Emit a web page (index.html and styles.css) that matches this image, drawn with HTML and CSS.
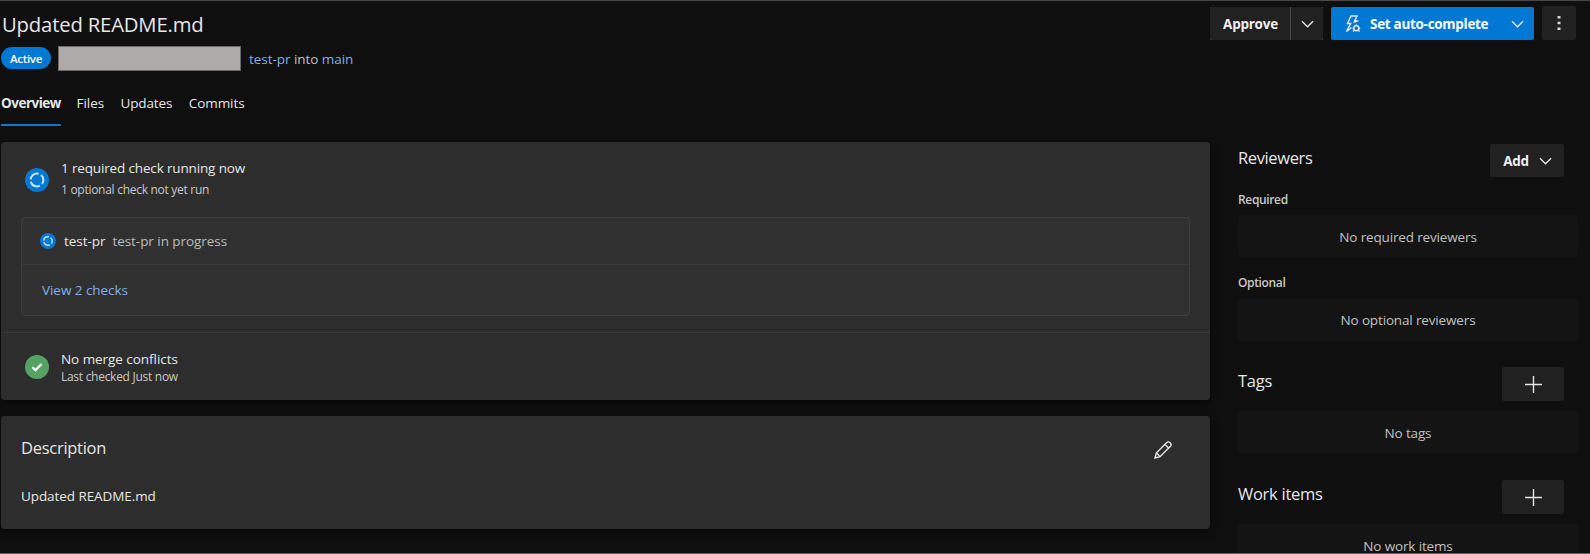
FILE: index.html
```html
<!DOCTYPE html>
<html lang="en">
<head>
    <meta charset="UTF-8">
    <meta name="viewport" content="width=device-width, initial-scale=1.0">
    <title>Updated README.md</title>
    <link rel="stylesheet" href="styles.css">
</head>
<body>

    <header class="page-header">
        <div class="header-info">
            <h1>Updated README.md</h1>
            <div class="pr-meta">
                <span class="status-pill">Active</span>
                <span class="author-box"></span>
                <span class="branches"><a class="link">test-pr</a> into <a class="link">main</a></span>
            </div>
        </div>
        <div class="header-actions">
            <div class="split-button">
                <button class="btn approve-btn">Approve</button>
                <button class="btn approve-menu">
                    <svg class="chevron" viewBox="0 0 14 8"><path d="M1 1l6 6 6-6"/></svg>
                </button>
            </div>
            <button class="btn primary-btn">
                <svg class="auto-icon" viewBox="0 0 16 18">
                    <path d="M8.500 7.500L12 6L9.800 5.500L12 1H6L2.500 8.500h3.200L1.500 16.500L6.500 12.500"/>
                    <circle cx="11.300" cy="13.300" r="2.500"/>
                    <path d="M11.300 9.500V11M7.500 13.300H9M13.600 13.300h1.600M8 16.500l1.500-1.500M14.600 16.500l-1.500-1.500"/>
                </svg>
                <span class="primary-text">Set auto-complete</span>
                <svg class="chevron" viewBox="0 0 14 8"><path d="M1 1l6 6 6-6"/></svg>
            </button>
            <button class="btn more-btn">
                <svg class="more-icon" viewBox="0 0 4 16"><path d="M.5 1h3v2.500h-3zM.5 6.800h3v2.500h-3zM.5 12.500h3V15h-3z"/></svg>
            </button>
        </div>
    </header>

    <nav class="tabs">
        <a class="tab selected">Overview</a>
        <a class="tab">Files</a>
        <a class="tab updates">Updates</a>
        <a class="tab">Commits</a>
    </nav>

    <main class="content">
        <div class="main-column">
            <section class="card status-card">
                <div class="status-row checks-row">
                    <svg class="status-icon" viewBox="0 0 24 24">
                        <circle class="blue" cx="12" cy="12" r="12"/>
                        <circle class="ring" cx="12" cy="12" r="6.400"/>
                    </svg>
                    <div class="checks-info">
                        <div class="checks-title">1 required check running now</div>
                        <div class="status-sub checks-sub">1 optional check not yet run</div>
                    </div>
                </div>
                <div class="checks-box">
                    <div class="check-line">
                        <svg class="small-icon" viewBox="0 0 24 24">
                            <circle class="blue" cx="12" cy="12" r="12"/>
                            <circle class="ring" cx="12" cy="12" r="6.400"/>
                        </svg>
                        <span class="check-name">test-pr</span>
                        <span class="check-state">test-pr in progress</span>
                    </div>
                    <div class="view-line"><a class="link">View 2 checks</a></div>
                </div>
                <div class="status-row merge-row">
                    <svg class="status-icon" viewBox="0 0 24 24">
                        <circle class="green" cx="12" cy="12" r="12"/>
                        <path class="tick" d="M7.500 12.200l3 3 6-6.200"/>
                    </svg>
                    <div>
                        <div>No merge conflicts</div>
                        <div class="status-sub merge-sub">Last checked Just now</div>
                    </div>
                </div>
            </section>

            <section class="card description-card">
                <div class="description-head">
                    <h2>Description</h2>
                    <svg class="pencil" viewBox="0 0 18 18">
                        <path d="M1 17l1.300-5L12.500 1.800a2.500 2.500 0 0 1 3.700 3.700L6 15.700zM2.500 12l3.500 3.500M11 3.500L14.500 7"/>
                    </svg>
                </div>
                <p class="description-text">Updated README.md</p>
            </section>
        </div>

        <aside class="side-column">
            <div class="side-head reviewers-head">
                <h2>Reviewers</h2>
                <button class="btn add-btn">Add
                    <svg class="chevron" viewBox="0 0 14 8"><path d="M1 1l6 6 6-6"/></svg>
                </button>
            </div>
            <h3>Required</h3>
            <div class="empty-box">No required reviewers</div>
            <h3 class="optional-label">Optional</h3>
            <div class="empty-box">No optional reviewers</div>

            <div class="side-head">
                <h2>Tags</h2>
                <button class="btn plus-btn">
                    <svg class="plus" viewBox="0 0 17 17"><path d="M8.500 0v17M0 8.500h17"/></svg>
                </button>
            </div>
            <div class="empty-box">No tags</div>

            <div class="side-head">
                <h2>Work items</h2>
                <button class="btn plus-btn">
                    <svg class="plus" viewBox="0 0 17 17"><path d="M8.500 0v17M0 8.500h17"/></svg>
                </button>
            </div>
            <div class="empty-box">No work items</div>
        </aside>
    </main>

</body>
</html>
```

FILE: styles.css
```css
* {
    box-sizing: border-box;
}

body {
    margin: 0;
    height: 554px;
    overflow: hidden;
    background-color: #0f0f0f;
    border-top: 1px solid #484848;
    border-bottom: 1px solid #606060;
    color: #e6e6e6;
    font-family: "Open Sans", "Noto Sans", sans-serif;
    font-size: 13.5px;
    line-height: 20px;
    letter-spacing: -0.05px;
    white-space: nowrap;
}

h1, h2, h3, p {
    margin: 0;
    font-weight: 400;
}

svg {
    display: block;
    flex: none;
    fill: none;
    stroke: #e6e6e6;
}

.link {
    color: #82aeec;
}

/* Header */
.page-header {
    display: flex;
    justify-content: space-between;
    height: 85px;
    padding: 5px 14px 0 1px;
}

h1 {
    padding: 4px 0 0 1px;
    font-size: 20.3px;
    line-height: 28px;
    letter-spacing: -0.18px;
}

.pr-meta {
    display: flex;
    align-items: center;
    height: 24px;
    margin-top: 8px;
}

.status-pill {
    width: 50px;
    height: 22px;
    border-radius: 11px;
    background-color: #0078d4;
    color: #fff;
    font-size: 11.5px;
    font-weight: 600;
    line-height: 23px;
    letter-spacing: -0.3px;
    text-align: center;
}

.author-box {
    width: 183px;
    height: 25px;
    margin: 0 8px 0 7px;
    border: 1px solid #6d6969;
    background-color: #aeaaa9;
}

.branches {
    padding-top: 2px;
    color: #c0c0c0;
}

.header-actions {
    display: flex;
    gap: 8px;
    height: 34px;
}

.btn {
    display: flex;
    align-items: center;
    justify-content: center;
    padding: 0;
    border: none;
    border-radius: 2px;
    background-color: #212121;
    color: #f0f0f0;
    font-family: inherit;
    font-size: 13.5px;
    font-weight: 700;
    letter-spacing: -0.3px;
    white-space: nowrap;
}

.split-button {
    display: flex;
    gap: 1px;
    height: 33px;
    margin-top: 1px;
    background-color: #484848;
}

.approve-btn {
    width: 80px;
    padding: 1px 0 0 1px;
    border-radius: 2px 0 0 2px;
    letter-spacing: -0.25px;
}

.approve-menu {
    width: 32px;
    border-radius: 0 2px 2px 0;
}

.chevron {
    width: 13px;
    height: 8px;
    stroke-width: 1.4;
}

.primary-btn {
    width: 203px;
    height: 33px;
    margin-top: 1px;
    justify-content: flex-start;
    padding-left: 14px;
    background-color: #0078d4;
    color: #fff;
}

.primary-text {
    width: 141px;
    margin-left: 9px;
    padding-top: 1px;
    text-align: left;
}

.auto-icon {
    width: 16px;
    height: 18px;
    stroke-width: 1.4;
}

.more-btn {
    width: 34px;
}

.more-icon {
    width: 4px;
    height: 16px;
    fill: #d8d8d8;
    stroke: none;
}

/* Tabs */
.tabs {
    display: flex;
    gap: 16.5px;
    height: 40px;
    padding-left: 1px;
}

.tab {
    height: 40px;
    padding-top: 7px;
}

.tab.selected {
    width: 60px;
    margin-right: -1px;
    border-bottom: 2px solid #0078d4;
    font-weight: 700;
    letter-spacing: -0.5px;
}

.tab.updates {
    letter-spacing: -0.15px;
}

/* Main column */
.content {
    display: flex;
    gap: 28px;
    padding: 16px 12px 0 1px;
}

.main-column {
    width: 1209px;
    flex: none;
}

.card {
    border-radius: 4px;
    background-color: #2d2d2d;
    box-shadow: 0 3px 7px rgba(0, 0, 0, 0.6);
}

.status-card {
    height: 258px;
    padding-top: 15px;
}

.status-row {
    display: flex;
    align-items: center;
    padding-left: 24px;
    gap: 12px;
}

.checks-row {
    height: 46px;
}

.checks-info {
    padding-bottom: 2px;
}

.checks-title {
    letter-spacing: -0.15px;
}

.status-icon {
    width: 24px;
    height: 24px;
}

.small-icon {
    width: 16px;
    height: 16px;
}

.blue {
    fill: #0078d4;
    stroke: none;
}

.green {
    fill: #55a362;
    stroke: none;
}

.ring {
    stroke: #cfe6fa;
    stroke-width: 2;
    stroke-dasharray: 10.8 2.6;
    stroke-dashoffset: -6.8;
}

.tick {
    stroke: #fff;
    stroke-width: 2.3;
}

.status-sub {
    color: #c8c8c8;
    font-size: 12px;
    letter-spacing: -0.28px;
}

.checks-sub {
    margin-top: 2px;
}

.checks-box {
    height: 99px;
    margin: 14px 20px 0;
    border: 1px solid #3e3e3e;
    border-radius: 4px;
    background-color: #303030;
}

.check-line {
    display: flex;
    align-items: center;
    height: 47px;
    padding-left: 18px;
    border-bottom: 1px solid #383838;
}

.check-name {
    margin-left: 8px;
}

.check-state {
    margin-left: 7px;
    color: #bdbdbd;
}

.view-line {
    padding: 15px 0 0 20px;
}

.merge-row {
    height: 68px;
    margin-top: 16px;
    border-top: 1px solid #3a3a3a;
}

.merge-sub {
    line-height: 15px;
}

.description-card {
    height: 113px;
    margin-top: 16px;
    padding: 20px 38px 0 20px;
}

.description-head {
    display: flex;
    justify-content: space-between;
}

h2 {
    font-size: 16.5px;
    line-height: 24px;
    letter-spacing: -0.27px;
}

.pencil {
    width: 18px;
    height: 18px;
    margin-top: 5px;
    stroke-width: 1.4;
}

.description-text {
    margin-top: 26px;
    letter-spacing: -0.08px;
}

/* Right column */
.side-column {
    width: 340px;
}

.side-column h2 {
    padding-top: 2px;
}

.side-head {
    display: flex;
    justify-content: space-between;
    align-items: flex-start;
    height: 44px;
    margin-top: 26px;
    padding-right: 14px;
}

.reviewers-head {
    height: 48px;
    margin-top: 0;
    padding-top: 2px;
}

.reviewers-head h2 {
    letter-spacing: -0.38px;
}

.add-btn {
    width: 74px;
    height: 33px;
    padding: 1px 0 0 1px;
    gap: 10px;
}

.plus-btn {
    width: 62px;
    height: 34px;
}

.plus {
    width: 17px;
    height: 17px;
    stroke-width: 1.4;
}

h3 {
    height: 25px;
    color: #c8c8c8;
    font-size: 12px;
    font-weight: 600;
    line-height: 20px;
    letter-spacing: -0.35px;
}

.optional-label {
    margin-top: 15px;
}

.empty-box {
    height: 43px;
    border-radius: 4px;
    background-color: #141414;
    color: #c0c0c0;
    line-height: 45px;
    letter-spacing: -0.15px;
    text-align: center;
}
```
